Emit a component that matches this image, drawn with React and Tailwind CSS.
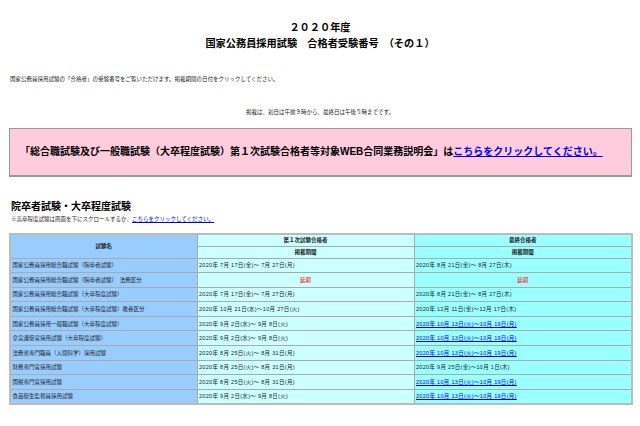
const rows = [
  ['国家公務員採用総合職試験（院卒者試験）', '2020年 7月 17日(金)～ 7月 27日(月)', '2020年 8月 21日(金)～ 8月 27日(木)', false],
  ['国家公務員採用総合職試験（院卒者試験）　法務区分', null, null, false],
  ['国家公務員採用総合職試験（大卒程度試験）', '2020年 7月 17日(金)～ 7月 27日(月)', '2020年 8月 21日(金)～ 8月 27日(木)', false],
  ['国家公務員採用総合職試験（大卒程度試験）教養区分', '2020年 10月 21日(水)～10月 27日(火)', '2020年 12月 11日(金)～12月 17日(木)', false],
  ['国家公務員採用一般職試験（大卒程度試験）', '2020年 9月 2日(水)～ 9月 8日(火)', '2020年 10月 13日(火)～10月 19日(月)', true],
  ['皇宮護衛官採用試験（大卒程度試験）', '2020年 9月 2日(水)～ 9月 8日(火)', '2020年 10月 13日(火)～10月 19日(月)', true],
  ['法務省専門職員（人間科学）採用試験', '2020年 8月 25日(火)～ 8月 31日(月)', '2020年 10月 13日(火)～10月 19日(月)', true],
  ['財務専門官採用試験', '2020年 8月 25日(火)～ 8月 31日(月)', '2020年 9月 25日(金)～10月 1日(木)', false],
  ['国税専門官採用試験', '2020年 8月 25日(火)～ 8月 31日(月)', '2020年 10月 13日(火)～10月 19日(月)', true],
  ['食品衛生監視員採用試験', '2020年 9月 2日(水)～ 9月 8日(火)', '2020年 10月 13日(火)～10月 19日(月)', true],
];

const cell = 'border border-[#aaaaaa] px-[1.5px] align-middle';
const dates = 'tracking-[0.3px]';

export default function App() {
  return (
    <div className="h-[426px] overflow-hidden bg-white pt-[20px] text-[5.5px] leading-[8px] text-[#222222] font-['Liberation_Sans','Noto_Sans_CJK_JP',sans-serif]">
      <h1 className="text-center text-[10.2px] font-bold leading-[16px] text-black">
        <div>２０２０年度</div>
        <div>国家公務員採用試験　合格者受験番号　（その１）</div>
      </h1>

      <p className="mt-[23px] ml-[10px]">
        国家公務員採用試験の「合格者」の受験番号をご覧いただけます。掲載期間の日付をクリックしてください。
      </p>
      <p className="mt-[25px] text-center">掲載は、初日は午前９時から、最終日は午後５時までです。</p>

      <div className="mx-[9px] mt-[12px] flex h-[49px] w-[623px] items-center border border-[#999999] border-b-2 bg-[#ffccdd] pl-[10px] text-[10px] font-bold text-black">
        <span>
          「総合職試験及び一般職試験（大卒程度試験）第１次試験合格者等対象WEB合同業務説明会」は
          <a className="text-[#0000ee] underline" href="#">こちらをクリックしてください。</a>
        </span>
      </div>

      <h2 className="mt-[23px] ml-[11px] text-[10px] font-bold leading-[14px] text-black">院卒者試験・大卒程度試験</h2>
      <p className="mt-[1px] ml-[11px] leading-[8px]">
        ※高卒程度試験は画面を下にスクロールするか、
        <a className="text-[#0000ee] underline" href="#">こちらをクリックしてください。</a>
      </p>

      <table className="mt-[10px] ml-[9px] w-[622px] table-fixed border-collapse border-2 border-[#bbbbbb]">
        <colgroup>
          <col className="w-[187px]" />
          <col className="w-[217px]" />
          <col className="w-[218px]" />
        </colgroup>
        <thead>
          <tr className="h-[12px]">
            <th rowSpan={2} className={`${cell} bg-[#99ccff] text-center`}>試験名</th>
            <th className={`${cell} bg-[#ccffff] text-center`}>第１次試験合格者</th>
            <th className={`${cell} bg-[#99ffff] text-center`}>最終合格者</th>
          </tr>
          <tr className="h-[12px]">
            <th className={`${cell} bg-[#ccffff] text-center`}>掲載期間</th>
            <th className={`${cell} bg-[#99ffff] text-center`}>掲載期間</th>
          </tr>
        </thead>
        <tbody>
          {rows.map(([name, first, final, linked]) => (
            <tr key={name} className="h-[14.6px]">
              <td className={`${cell} bg-[#99ccff]`}>{name}</td>
              {first ? (
                <td className={`${cell} ${dates} bg-[#ccffff]`}>{first}</td>
              ) : (
                <td className={`${cell} bg-[#ccffff] text-center text-[#ff0000]`}>延期</td>
              )}
              {final ? (
                <td className={`${cell} ${dates} bg-[#99ffff]`}>
                  {linked ? <a className="text-[#0000ee] underline" href="#">{final}</a> : final}
                </td>
              ) : (
                <td className={`${cell} bg-[#99ffff] text-center text-[#ff0000]`}>延期</td>
              )}
            </tr>
          ))}
        </tbody>
      </table>
    </div>
  );
}
